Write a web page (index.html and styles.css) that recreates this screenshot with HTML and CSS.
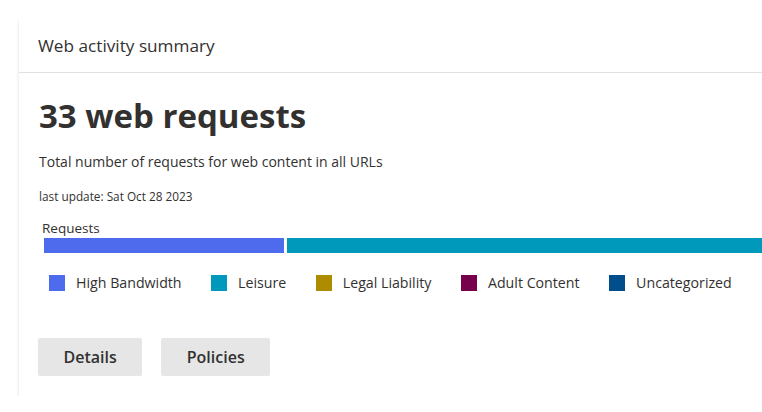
FILE: index.html
```html
<!DOCTYPE html>
<html lang="en">
<head>
<meta charset="utf-8">
<title>Web activity summary</title>
<link rel="stylesheet" href="styles.css">
</head>
<body>
<div class="card">
  <div class="card-header">Web activity summary</div>
  <div class="card-body">
    <h1 class="title">33 web requests</h1>
    <p class="subtitle">Total number of requests for web content in all URLs</p>
    <p class="updated">last update: Sat Oct 28 2023</p>
    <div class="chart">
      <div class="chart-label">Requests</div>
      <div class="bar">
        <div class="seg seg-bw" style="width: 240px"></div>
        <div class="seg seg-leisure" style="width: 552px"></div>
      </div>
    </div>
    <ul class="legend">
      <li class="legend-item"><span class="swatch sw-bw"></span>High Bandwidth</li>
      <li class="legend-item"><span class="swatch sw-leisure"></span>Leisure</li>
      <li class="legend-item"><span class="swatch sw-legal"></span>Legal Liability</li>
      <li class="legend-item"><span class="swatch sw-adult"></span>Adult Content</li>
      <li class="legend-item"><span class="swatch sw-uncat"></span>Uncategorized</li>
    </ul>
    <div class="actions">
      <button class="btn">Details</button>
      <button class="btn">Policies</button>
    </div>
  </div>
</div>
</body>
</html>
```
FILE: styles.css
```css
html, body {
  margin: 0;
  padding: 0;
  background: #ffffff;
  overflow: hidden;
}
body {
  padding: 19px 0 0 19px;
  font-family: "Open Sans", "Noto Sans", sans-serif;
  color: #323130;
}
.card {
  width: 860px;
  background: #fff;
  box-shadow: 0 1.6px 3.6px rgba(0,0,0,0.13), 0 0.3px 0.9px rgba(0,0,0,0.11);
}
.card-header {
  height: 54px;
  box-sizing: border-box;
  padding: 0 19px;
  display: flex;
  align-items: center;
  font-size: 17.2px;
  border-bottom: 1px solid #e1e1e1;
}
.card-body {
  padding: 21px 20px 20px 20px;
}
.title {
  margin: 0;
  font-size: 33px;
  font-weight: 700;
  line-height: 44px;
}
.subtitle {
  margin: 14px 0 0 0;
  font-size: 14px;
  line-height: 20px;
}
.updated {
  margin: 16px 0 0 0;
  font-size: 11.8px;
  line-height: 16px;
}
.chart {
  margin-top: 15px;
  padding-left: 5px;
}
.chart-label {
  font-size: 13.5px;
  line-height: 19px;
  margin-left: -2px;
}
.bar {
  display: flex;
  gap: 3px;
  height: 15px;
}
.seg { height: 100%; flex: none; }
.seg-bw { background: #4f6bed; }
.seg-leisure { background: #0099bc; }
.legend {
  list-style: none;
  margin: 21px 0 0 10px;
  padding: 0;
  display: flex;
  gap: 29.5px;
}
.legend-item {
  display: flex;
  align-items: center;
  gap: 11px;
  font-size: 14.2px;
  line-height: 18px;
}
.swatch {
  width: 16px;
  height: 16px;
  flex: none;
}
.sw-bw { background: #4f6bed; }
.sw-leisure { background: #0099bc; }
.sw-legal { background: #ae8c00; }
.sw-adult { background: #77004d; }
.sw-uncat { background: #004e8c; }
.actions {
  margin-top: 46px;
  display: flex;
  gap: 20px;
}
.btn {
  font-family: inherit;
  font-size: 16px;
  font-weight: 600;
  color: #323130;
  background: #e6e6e6;
  border: none;
  border-radius: 2px;
  height: 38px;
  padding: 0 25.5px;
  margin-left: -1px;
}
```
